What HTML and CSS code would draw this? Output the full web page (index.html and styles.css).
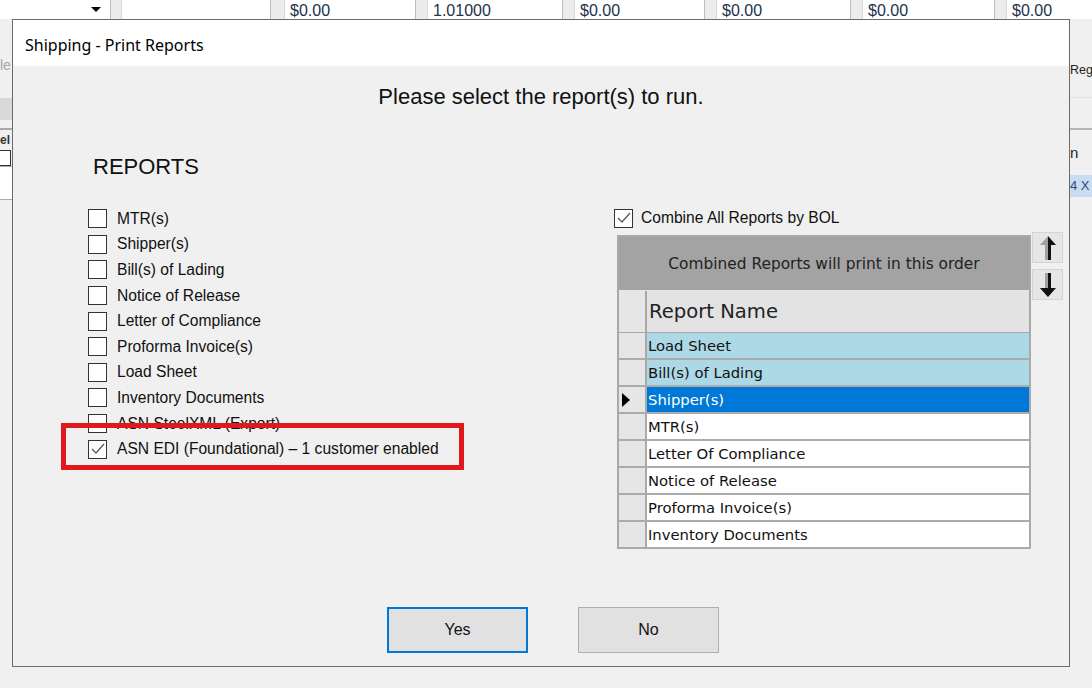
FILE: index.html
```html
<!DOCTYPE html>
<html lang="en">
<head>
    <meta charset="UTF-8">
    <meta name="viewport" content="width=device-width, initial-scale=1.0">
    <title>Shipping - Print Reports</title>
    <link rel="stylesheet" href="styles.css">
</head>
<body>
    <!-- Main window behind the dialog -->
    <div class="app">
        <div class="app-row">
            <div class="combo"><span class="combo-btn"></span></div>
            <div class="sep"></div>
            <div class="cell"></div>
            <div class="sep"></div>
            <div class="cell">$0.00</div>
            <div class="sep"></div>
            <div class="cell">1.01000</div>
            <div class="sep"></div>
            <div class="cell">$0.00</div>
            <div class="sep"></div>
            <div class="cell">$0.00</div>
            <div class="sep"></div>
            <div class="cell">$0.00</div>
            <div class="sep"></div>
            <div class="cell">$0.00</div>
        </div>
        <div class="app-body">
            <div class="app-left">
                <div class="ghost">le</div>
                <div class="band"></div>
                <div class="rule"></div>
                <div class="tag">el</div>
                <div class="mini-box"></div>
                <div class="text-box"></div>
            </div>
            <div class="app-right">
                <div class="right-label">Reg</div>
                <div class="thin-rule"></div>
                <div class="rule"></div>
                <div class="right-head">n</div>
                <div class="right-pick">4 X</div>
            </div>
        </div>
    </div>

    <!-- Dialog -->
    <div class="dialog">
        <div class="dialog-title">Shipping - Print Reports</div>
        <div class="prompt">Please select the report(s) to run.</div>

        <div class="columns">
            <div class="reports">
                <h2>REPORTS</h2>
                <ul class="report-list">
                    <li class="report-item"><span class="box"></span>MTR(s)</li>
                    <li class="report-item"><span class="box"></span>Shipper(s)</li>
                    <li class="report-item"><span class="box"></span>Bill(s) of Lading</li>
                    <li class="report-item"><span class="box"></span>Notice of Release</li>
                    <li class="report-item"><span class="box"></span>Letter of Compliance</li>
                    <li class="report-item"><span class="box"></span>Proforma Invoice(s)</li>
                    <li class="report-item"><span class="box"></span>Load Sheet</li>
                    <li class="report-item"><span class="box"></span>Inventory Documents</li>
                    <li class="report-item"><span class="box"></span>ASN SteelXML (Export)</li>
                    <li class="report-item">
                        <span class="box">
                            <svg width="14" height="12" viewBox="0 0 14 12"><polyline points="1,6 5,10 13,1" fill="none" stroke="#5a5a5a" stroke-width="1.3"/></svg>
                        </span>ASN EDI (Foundational) – 1 customer enabled
                    </li>
                </ul>
            </div>

            <div class="combine">
                <div class="combine-row">
                    <span class="box">
                        <svg width="14" height="12" viewBox="0 0 14 12"><polyline points="1,6 5,10 13,1" fill="none" stroke="#5a5a5a" stroke-width="1.3"/></svg>
                    </span>Combine All Reports by BOL
                </div>
                <div class="grid-wrap">
                    <div class="grid">
                        <div class="grid-caption">Combined Reports will print in this order</div>
                        <div class="grid-head">
                            <div class="row-head"></div>
                            <div class="name">Report Name</div>
                        </div>
                        <div class="grid-row picked"><div class="row-head"></div><div class="name">Load Sheet</div></div>
                        <div class="grid-row picked"><div class="row-head"></div><div class="name">Bill(s) of Lading</div></div>
                        <div class="grid-row current"><div class="row-head"><span class="pointer"></span></div><div class="name">Shipper(s)</div></div>
                        <div class="grid-row"><div class="row-head"></div><div class="name">MTR(s)</div></div>
                        <div class="grid-row"><div class="row-head"></div><div class="name">Letter Of Compliance</div></div>
                        <div class="grid-row"><div class="row-head"></div><div class="name">Notice of Release</div></div>
                        <div class="grid-row"><div class="row-head"></div><div class="name">Proforma Invoice(s)</div></div>
                        <div class="grid-row"><div class="row-head"></div><div class="name">Inventory Documents</div></div>
                    </div>
                    <div class="arrows">
                        <div class="arrow-btn">
                            <svg width="16" height="24" viewBox="0 0 16 24">
                                <polygon points="8,0 0,9 5,9 5,24 8,24" fill="#a0a0a0"/>
                                <polygon points="8,0 16,9 11,9 11,24 8,24" fill="#111"/>
                            </svg>
                        </div>
                        <div class="arrow-btn">
                            <svg width="16" height="24" viewBox="0 0 16 24">
                                <polygon points="8,24 0,15 5,15 5,0 8,0" fill="#a0a0a0"/>
                                <polygon points="8,24 16,15 11,15 11,0 8,0" fill="#111"/>
                                <polygon points="8,24 0,15 5,15 8,15" fill="#111"/>
                            </svg>
                        </div>
                    </div>
                </div>
            </div>
        </div>

        <div class="actions">
            <button class="btn btn-default">Yes</button>
            <button class="btn">No</button>
        </div>

        <!-- red annotation frame -->
        <div class="callout"></div>
    </div>
</body>
</html>
```

FILE: styles.css
```css
* {
    box-sizing: border-box;
}

body {
    margin: 0;
    width: 1092px;
    height: 688px;
    overflow: hidden;
    position: relative;
    background: #f0f0f0;
    font-family: 'Liberation Sans', Arial, sans-serif;
    color: #000;
}

/* Window behind */
.app {
    display: flex;
    flex-direction: column;
    height: 100%;
}

.app-row {
    display: grid;
    grid-template-columns: 110px 12px 148px 15px 130px 13px 134px 13px 129px 13px 133px 13px 131px 13px 1fr;
    height: 19px;
    background: #fff;
}

.combo {
    display: flex;
    justify-content: flex-end;
    align-items: center;
    padding-right: 9px;
}

.combo-btn {
    width: 0;
    height: 0;
    border-left: 5px solid transparent;
    border-right: 5px solid transparent;
    border-top: 5px solid #000;
}

.sep {
    background: #ececec;
    border-left: 1px solid #bdbdbd;
    border-right: 1px solid #d8d8d8;
}

.cell {
    padding: 3px 0 0 5px;
    font-size: 16px;
    line-height: 16px;
    color: #22324b;
    white-space: nowrap;
}

.app-body {
    flex: 1;
    display: flex;
    justify-content: space-between;
}

.app-left {
    width: 12px;
}

.ghost {
    height: 79px;
    padding-top: 38px;
    font-size: 14px;
    line-height: 16px;
    color: #a8a8a8;
}

.band {
    height: 22px;
    background: #d9d9d9;
}

.rule {
    height: 2px;
    margin-top: 8px;
    background: #a9a9a9;
}

.tag {
    height: 20px;
    padding-top: 3px;
    font-size: 12px;
    font-weight: bold;
    color: #333;
}

.mini-box {
    width: 11px;
    height: 16px;
    border: 1px solid #333;
    border-left: none;
    background: #fff;
}

.text-box {
    height: 34px;
    border-top: 1px solid #a9a9a9;
    border-bottom: 1px solid #a9a9a9;
    background: #fff;
}

.app-right {
    width: 22px;
    padding-top: 43px;
}

.right-label {
    font-size: 12.5px;
    line-height: 16px;
    color: #222;
    white-space: nowrap;
}

.thin-rule {
    height: 1px;
    margin-top: 19px;
    background: #e2e2e2;
}

.app-right .rule {
    margin-top: 30px;
    background: #b4b4b4;
}

.right-head {
    margin-top: 15px;
    font-size: 15px;
    line-height: 16px;
    color: #222;
}

.right-pick {
    margin-top: 14px;
    height: 22px;
    background: #c9dcf2;
    font-size: 13px;
    line-height: 22px;
    color: #2d4e7a;
}

/* Dialog */
.dialog {
    position: absolute;
    left: 12px;
    top: 19px;
    width: 1058px;
    height: 648px;
    border: 1px solid #6b6b6b;
    background: #f0f0f0;
    display: flex;
    flex-direction: column;
}

.dialog-title {
    height: 46px;
    background: #fff;
    padding: 3px 0 0 12px;
    display: flex;
    align-items: center;
    font-family: 'Noto Sans', sans-serif;
    font-size: 16px;
    color: #000;
}

.prompt {
    margin-top: 19px;
    text-align: center;
    font-size: 22px;
    line-height: 24px;
    color: #111;
}

.columns {
    display: flex;
    margin-top: 46px;
    padding-left: 75px;
}

.reports {
    width: 526px;
}

.reports h2 {
    margin: 0;
    padding-left: 5px;
    font-size: 22px;
    font-weight: normal;
    line-height: 24px;
    color: #111;
}

.report-list {
    list-style: none;
    margin: 27px 0 0;
    padding: 0;
}

.report-item {
    height: 25.6px;
    display: flex;
    align-items: center;
    gap: 10px;
    font-size: 15.6px;
    color: #111;
}

.box {
    width: 19px;
    height: 19px;
    border: 1px solid #333;
    background: #fff;
    display: flex;
    justify-content: center;
    align-items: center;
    flex-shrink: 0;
}

.combine {
    padding-top: 51px;
}

.combine-row {
    height: 24px;
    display: flex;
    align-items: center;
    gap: 8px;
    font-size: 15.6px;
    color: #111;
}

.grid-wrap {
    display: flex;
    gap: 1px;
    margin-top: 5px;
    margin-left: 3px;
}

.grid {
    width: 414px;
    border: 2px solid #a9a9a9;
    border-bottom: none;
    background: #fff;
    font-family: 'DejaVu Sans', Verdana, sans-serif;
}

.grid-caption {
    height: 54px;
    background: #a3a3a3;
    border-bottom: 1px solid #e6e6e6;
    display: flex;
    justify-content: center;
    align-items: center;
    font-size: 15.4px;
    color: #222;
}

.grid-head {
    display: flex;
    height: 42px;
    border-bottom: 1px solid #a9a9a9;
}

.row-head {
    width: 28px;
    background: #e6e6e6;
    border-right: 2px solid #a9a9a9;
    display: flex;
    align-items: center;
    padding-left: 3px;
    flex-shrink: 0;
}

.grid-head .name {
    flex: 1;
    background: #e3e3e3;
    padding-left: 2px;
    display: flex;
    align-items: center;
    font-size: 19.6px;
    color: #222;
}

.grid-row {
    display: flex;
    height: 27px;
    border-bottom: 2px solid #ababab;
}

.grid-row .name {
    flex: 1;
    padding-left: 1px;
    font-size: 14.8px;
    line-height: 25px;
    color: #111;
    white-space: nowrap;
}

.grid-row.picked .name {
    background: #add8e6;
}

.grid-row.current .name {
    background: #0078d7;
    color: #fff;
}

.pointer {
    width: 0;
    height: 0;
    border-left: 8px solid #000;
    border-top: 7px solid transparent;
    border-bottom: 7px solid transparent;
}

.arrows {
    display: flex;
    flex-direction: column;
    gap: 6px;
    margin-top: -3px;
}

.arrow-btn {
    width: 31px;
    height: 31px;
    background: #e6e6e6;
    border: 1px solid #d4d4d4;
    display: flex;
    justify-content: center;
    align-items: center;
}

.actions {
    display: flex;
    gap: 50px;
    margin-top: 58px;
    padding-left: 374px;
}

.btn {
    width: 141px;
    height: 46px;
    background: #e1e1e1;
    border: 1px solid #adadad;
    font-family: 'Liberation Sans', Arial, sans-serif;
    font-size: 16px;
    color: #111;
    padding: 0;
}

.btn-default {
    border: 2px solid #0078d7;
}

.callout {
    position: absolute;
    left: 48px;
    top: 403px;
    width: 403px;
    height: 47px;
    border: 5px solid #e0191f;
}
```
